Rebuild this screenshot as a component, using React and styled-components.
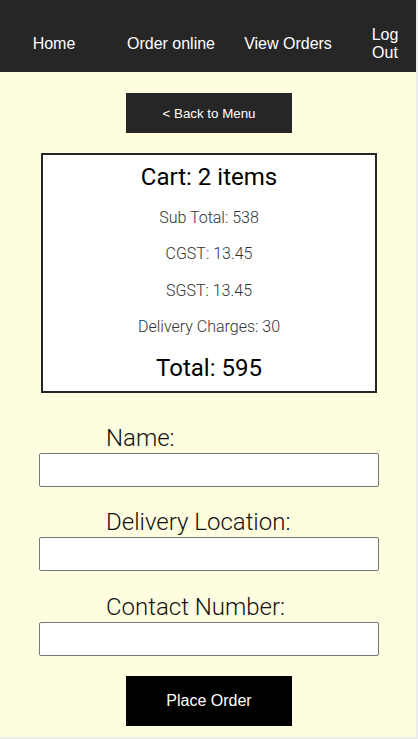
import React from "react";
import styled, { createGlobalStyle } from "styled-components";

const GlobalStyle = createGlobalStyle`
  html, body {
    margin: 0;
    padding: 0;
    background: #ececec;
  }
  * {
    box-sizing: border-box;
  }
`;

const Page = styled.div`
  width: 416px;
  min-height: 737px;
  background: #fffde0;
  font-family: Roboto, "Liberation Sans", sans-serif;
`;

const NavWrapper = styled.nav`
  width: 100%;
  height: 72px;
  padding-top: 16px;
  background: #262626;
  display: flex;
  align-items: center;
`;

const NavItem = styled.a`
  flex: 0 0 ${(p) => p.$w}px;
  margin-left: ${(p) => p.$ml || 0}px;
  text-align: center;
  color: #fff;
  font-family: "Liberation Sans", Arial, sans-serif;
  font-size: 16px;
  line-height: 18px;
  text-decoration: none;
  cursor: pointer;
`;

const Main = styled.main`
  padding-left: 2px;
  display: flex;
  flex-direction: column;
  align-items: center;
`;

const BackButton = styled.button`
  margin-top: 21px;
  width: 166px;
  height: 40px;
  border: none;
  background: #262626;
  color: #fff;
  font-family: "Liberation Sans", Arial, sans-serif;
  font-size: 13.33px;
  cursor: pointer;
`;

const CartBox = styled.div`
  margin-top: 20px;
  width: 336px;
  border: 2px solid #262626;
  background: #fff;
  padding: 8px 0 9px;
  display: flex;
  flex-direction: column;
  align-items: center;
  gap: 16.5px;
`;

const Heading = styled.h2`
  margin: 0;
  font-size: 24px;
  font-weight: 400;
  line-height: 28px;
  color: #000;
`;

const Detail = styled.p`
  margin: 0;
  font-size: 16px;
  font-weight: 300;
  line-height: 20px;
  color: #333;
`;

const Form = styled.form`
  margin-top: 31px;
  width: 340px;
  display: flex;
  flex-direction: column;
  gap: 21.5px;
`;

const Field = styled.div`
  display: flex;
  flex-direction: column;
  gap: 1px;
`;

const Label = styled.label`
  padding-left: 67px;
  font-size: 24px;
  font-weight: 300;
  line-height: 28px;
  color: #111;
`;

const Input = styled.input`
  width: 100%;
  height: 34px;
  border: 1px solid #767676;
  border-radius: 2px;
  background: #fff;
  font-size: 16px;
  padding: 0 6px;
`;

const SubmitButton = styled.button`
  margin-top: 20.5px;
  width: 166px;
  height: 50px;
  border: none;
  background: #000;
  color: #fff;
  font-family: "Liberation Sans", Arial, sans-serif;
  font-size: 16px;
  cursor: pointer;
`;

const cart = {
  items: 2,
  subTotal: 538,
  cgst: 13.45,
  sgst: 13.45,
  delivery: 30,
  total: 595,
};

const fields = ["Name:", "Delivery Location:", "Contact Number:"];

export default function App() {
  return (
    <>
      <GlobalStyle />
      <Page>
        <NavWrapper>
          <NavItem $w={108}>Home</NavItem>
          <NavItem $w={126}>Order online</NavItem>
          <NavItem $w={108}>View Orders</NavItem>
          <NavItem $w={46} $ml={20}>Log Out</NavItem>
        </NavWrapper>

        <Main>
          <BackButton>&lt; Back to Menu</BackButton>

          <CartBox>
            <Heading>Cart: {cart.items} items</Heading>
            <Detail>Sub Total: {cart.subTotal}</Detail>
            <Detail>CGST: {cart.cgst}</Detail>
            <Detail>SGST: {cart.sgst}</Detail>
            <Detail>Delivery Charges: {cart.delivery}</Detail>
            <Heading>Total: {cart.total}</Heading>
          </CartBox>

          <Form onSubmit={(e) => e.preventDefault()}>
            {fields.map((f) => (
              <Field key={f}>
                <Label>{f}</Label>
                <Input type="text" />
              </Field>
            ))}
          </Form>

          <SubmitButton>Place Order</SubmitButton>
        </Main>
      </Page>
    </>
  );
}
